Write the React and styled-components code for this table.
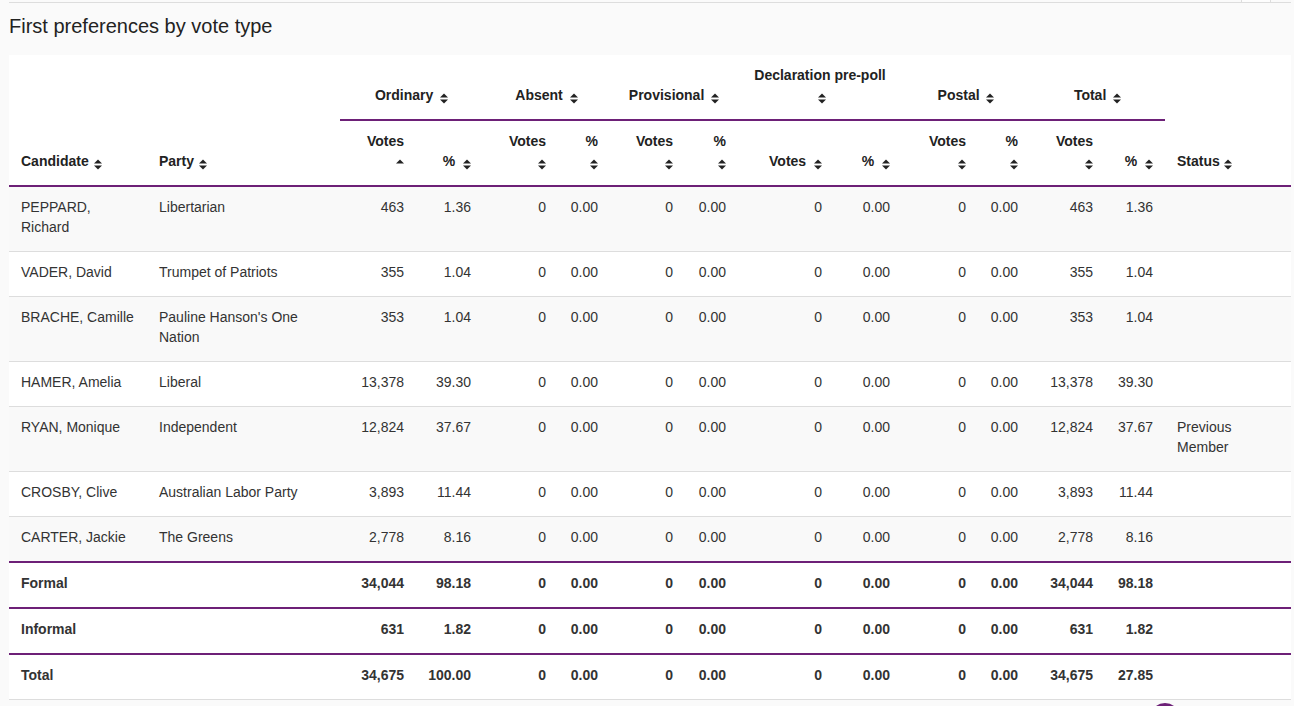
import React from 'react';
import styled, { createGlobalStyle, css } from 'styled-components';

const PURPLE = '#6d2077';

const GlobalStyle = createGlobalStyle`
  html, body { margin: 0; padding: 0; background: #fafafa; }
  body {
    font-family: "Liberation Sans", Arial, Helvetica, sans-serif;
    font-size: 14px;
    line-height: 20px;
    color: #333;
  }
  * { box-sizing: border-box; }
`;

const Page = styled.div`
  position: relative;
  width: 1294px;
  height: 706px;
  overflow: hidden;
`;

const Content = styled.main`
  margin-left: 9px;
  width: 1282px;
`;

const TopBar = styled.div`
  display: flex;
  justify-content: flex-end;
  height: 2px;
  padding-right: 20px;
`;

const TabStub = styled.div`
  width: 30px;
  height: 2px;
  border-left: 1px solid #ddd;
  border-right: 1px solid #ddd;
  background: #fdfdfd;
`;

const Rule = styled.div`
  border-top: 1px solid #ddd;
`;

const Title = styled.h2`
  margin: 12px 0 18px;
  font-size: 20px;
  line-height: 22px;
  font-weight: 400;
  color: #222;
`;

const Table = styled.table`
  width: 1282px;
  table-layout: fixed;
  border-collapse: collapse;
  background: #fff;
`;

const THead = styled.thead`
  border-bottom: 2px solid ${PURPLE};
`;

const HeadCell = styled.th`
  padding: 10px 12px 14px;
  vertical-align: bottom;
  font-weight: 700;
  color: #222;
  text-align: ${(p) => p.$align || 'left'};
  ${(p) =>
    p.$group &&
    css`
      border-bottom: 2px solid ${PURPLE};
    `}
`;

const Label = styled.span`
  display: ${(p) => (p.$stacked ? 'block' : 'inline')};
`;

const IconSvg = styled.svg`
  width: 8px;
  height: 11px;
  vertical-align: -4px;
  margin-left: ${(p) => p.$gap}px;
  fill: #222;
`;

const BodyRow = styled.tr`
  &:nth-child(odd) {
    background: #f9f9f9;
  }
`;

const SummaryRow = styled.tr`
  border-top: 2px solid ${PURPLE};
  font-weight: 700;
  &:last-child {
    border-bottom: 1px solid #ddd;
  }
`;

const Cell = styled.td`
  padding: 10px 12px 14px;
  vertical-align: top;
  text-align: ${(p) => (p.$num ? 'right' : 'left')};
  border-top: 1px solid #ddd;
`;

const Bubble = styled.div`
  position: absolute;
  left: 1150px;
  top: 703px;
  width: 30px;
  height: 30px;
  border-radius: 50%;
  background: ${PURPLE};
`;

function SortIcon({ dir = 'both', gap = 0 }) {
  return (
    <IconSvg viewBox="0 0 8 11" $gap={gap} aria-hidden="true">
      <polygon points="0,4.6 4,0.4 8,4.6" />
      {dir === 'both' && <polygon points="0,6.4 8,6.4 4,10.6" />}
    </IconSvg>
  );
}

const widths = [138, 193, 76, 67, 75, 52, 75, 53, 96, 68, 76, 52, 75, 60, 126];

const groups = [
  { name: 'Ordinary', votes: { stacked: true, dir: 'asc' }, pct: { stacked: false } },
  { name: 'Absent', votes: { stacked: true }, pct: { stacked: true } },
  { name: 'Provisional', votes: { stacked: true }, pct: { stacked: true } },
  { name: 'Declaration pre-poll', stacked: true, votes: { stacked: false }, pct: { stacked: false } },
  { name: 'Postal', votes: { stacked: true }, pct: { stacked: true } },
  { name: 'Total', votes: { stacked: true }, pct: { stacked: false } },
];

const zeros = ['0', '0.00', '0', '0.00', '0', '0.00', '0', '0.00'];

const candidates = [
  { name: 'PEPPARD, Richard', party: 'Libertarian', v: '463', p: '1.36' },
  { name: 'VADER, David', party: 'Trumpet of Patriots', v: '355', p: '1.04' },
  { name: 'BRACHE, Camille', party: "Pauline Hanson's One Nation", v: '353', p: '1.04' },
  { name: 'HAMER, Amelia', party: 'Liberal', v: '13,378', p: '39.30' },
  { name: 'RYAN, Monique', party: 'Independent', v: '12,824', p: '37.67', status: 'Previous Member' },
  { name: 'CROSBY, Clive', party: 'Australian Labor Party', v: '3,893', p: '11.44' },
  { name: 'CARTER, Jackie', party: 'The Greens', v: '2,778', p: '8.16' },
];

const summaries = [
  { label: 'Formal', v: '34,044', p: '98.18', tp: '98.18' },
  { label: 'Informal', v: '631', p: '1.82', tp: '1.82' },
  { label: 'Total', v: '34,675', p: '100.00', tp: '27.85' },
];

function SubHead({ label, stacked, dir }) {
  return (
    <HeadCell $align="right">
      <Label $stacked={stacked}>{label}</Label>
      {!stacked && ' '}
      <SortIcon dir={dir} gap={stacked ? 0 : 4} />
    </HeadCell>
  );
}

function NumberCells({ v, p, tp }) {
  return (
    <>
      <Cell $num>{v}</Cell>
      <Cell $num>{p}</Cell>
      {zeros.map((z, i) => (
        <Cell $num key={i}>
          {z}
        </Cell>
      ))}
      <Cell $num>{v}</Cell>
      <Cell $num>{tp || p}</Cell>
    </>
  );
}

export default function App() {
  return (
    <Page>
      <GlobalStyle />
      <Content>
        <TopBar>
          <TabStub />
        </TopBar>
        <Rule />
        <Title>First preferences by vote type</Title>
        <Table>
          <colgroup>
            {widths.map((w, i) => (
              <col key={i} style={{ width: w }} />
            ))}
          </colgroup>
          <THead>
            <tr>
              <HeadCell rowSpan={2}>
                Candidate <SortIcon gap={1} />
              </HeadCell>
              <HeadCell rowSpan={2}>
                Party <SortIcon gap={1} />
              </HeadCell>
              {groups.map((g) => (
                <HeadCell key={g.name} colSpan={2} $align="center" $group>
                  <Label $stacked={g.stacked}>{g.name}</Label>
                  {!g.stacked && ' '}
                  <SortIcon gap={g.stacked ? 4 : 3} />
                </HeadCell>
              ))}
              <HeadCell rowSpan={2}>
                Status <SortIcon gap={0} />
              </HeadCell>
            </tr>
            <tr>
              {groups.map((g) => (
                <React.Fragment key={g.name}>
                  <SubHead label="Votes" stacked={g.votes.stacked} dir={g.votes.dir} />
                  <SubHead label="%" stacked={g.pct.stacked} />
                </React.Fragment>
              ))}
            </tr>
          </THead>
          <tbody>
            {candidates.map((c) => (
              <BodyRow key={c.name}>
                <Cell>{c.name}</Cell>
                <Cell>{c.party}</Cell>
                <NumberCells v={c.v} p={c.p} />
                <Cell>{c.status || ''}</Cell>
              </BodyRow>
            ))}
          </tbody>
          <tfoot>
            {summaries.map((s) => (
              <SummaryRow key={s.label}>
                <Cell>{s.label}</Cell>
                <Cell />
                <NumberCells v={s.v} p={s.p} tp={s.tp} />
                <Cell />
              </SummaryRow>
            ))}
          </tfoot>
        </Table>
      </Content>
      <Bubble />
    </Page>
  );
}
